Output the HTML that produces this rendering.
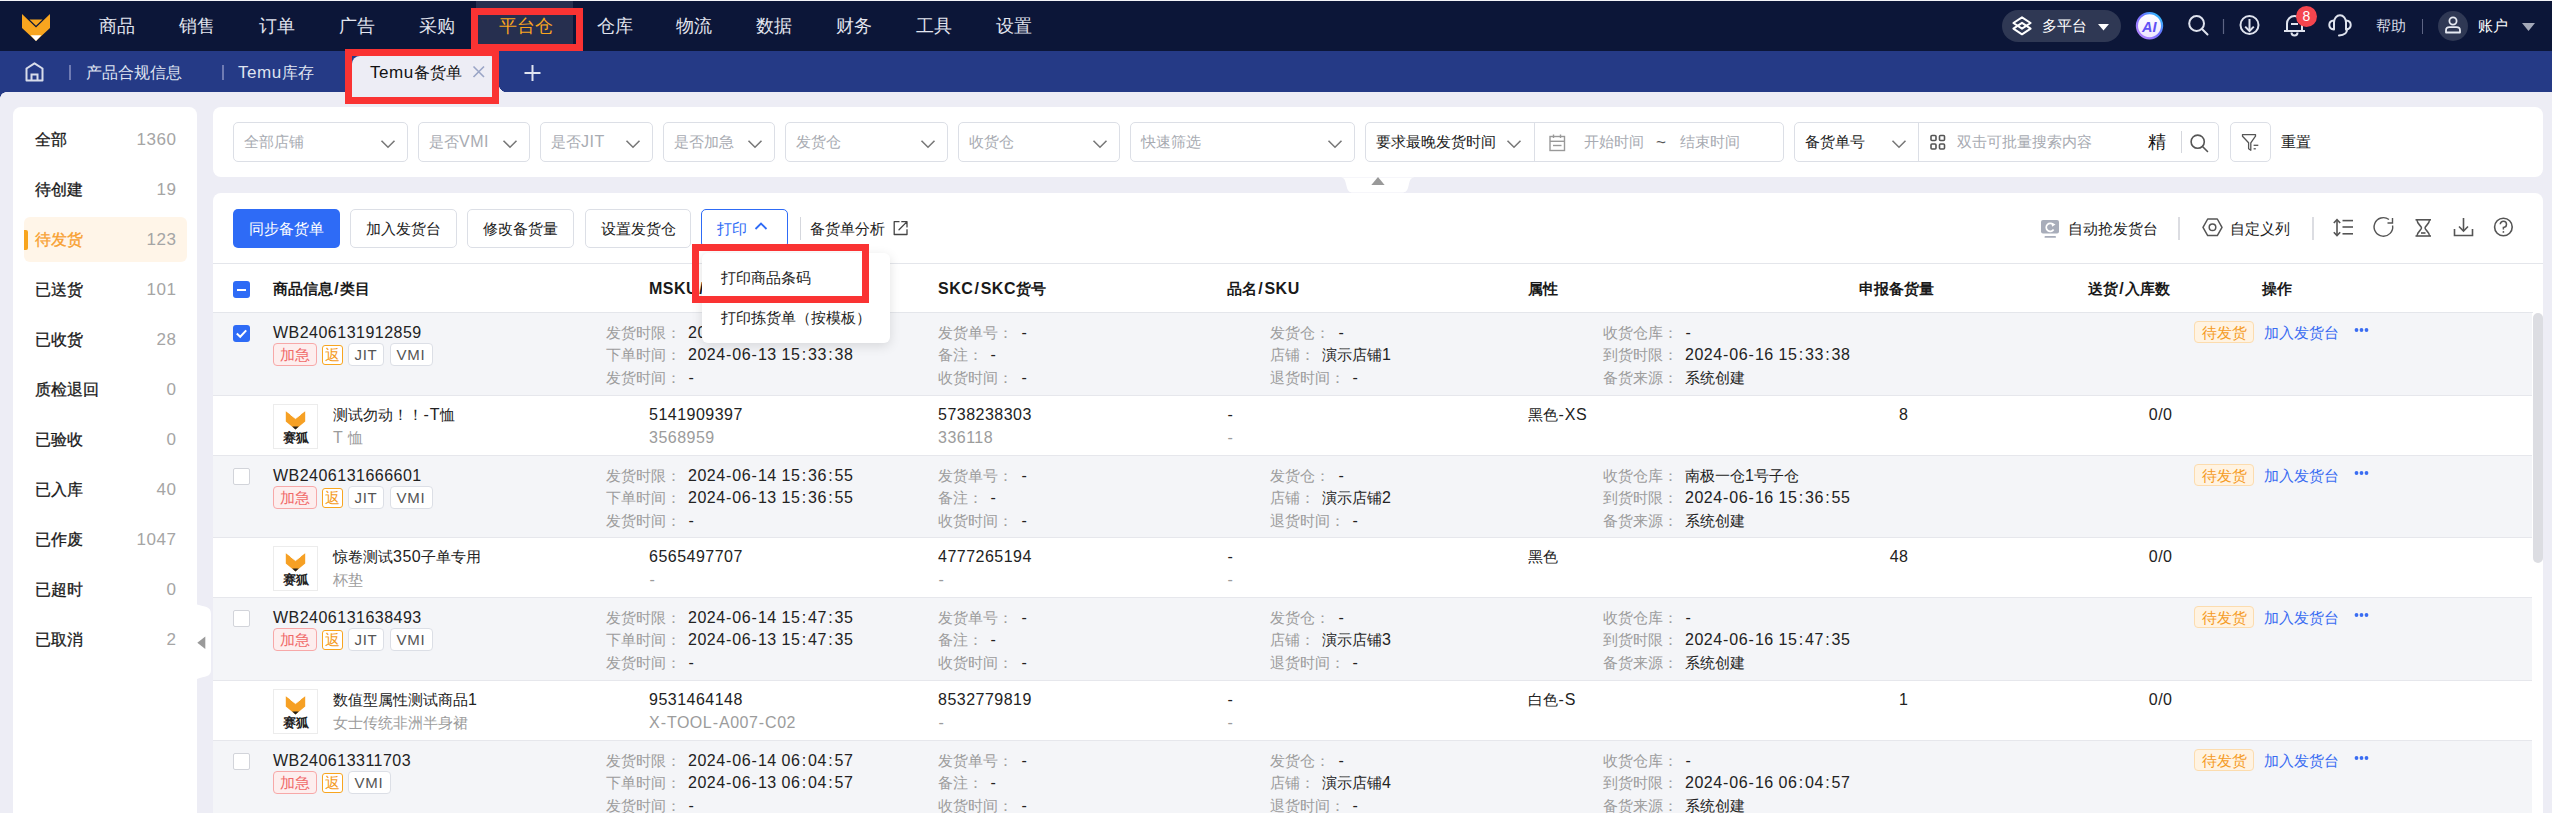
<!DOCTYPE html><html><head><meta charset="utf-8"><style>
*{box-sizing:border-box;margin:0;padding:0}
html,body{width:2552px;height:813px;overflow:hidden}
body{text-spacing-trim:space-all;position:relative;background:#ededf5;font-family:"Liberation Sans",sans-serif;color:#222}
.t{position:absolute;white-space:nowrap}
.r{position:absolute}
.l{letter-spacing:0.03em;font-size:1.0667em}
.c{font-style:normal;margin:0 1.4px}
.d{font-style:normal;margin:0 0.5px}
.hd .l{letter-spacing:0.03em}
svg{position:absolute;overflow:visible}
</style></head><body>
<div class="r" style="left:0px;top:0px;width:2552px;height:1px;background:#f4f4f8;"></div>
<div class="r" style="left:0px;top:1px;width:2552px;height:50px;background:#0c1638;"></div>
<svg style="left:0;top:0" width="60" height="51" viewBox="0 0 60 51">
<polygon points="22,14 36,27.6 50,14 50,28 36,41 22,28" fill="#f8a51f"/>
<polygon points="29.5,19.6 42.5,19.6 36,25.8" fill="#f8a51f"/>
<polygon points="30.6,35.3 41.4,35.3 36,41" fill="#ffffff"/>
</svg>
<div class="r" style="left:476px;top:1px;width:97px;height:50px;background:#262f4f;"></div>
<div class="t " style="left:99px;top:14.0px;font-size:18px;line-height:24px;color:#e2e5ef;">商品</div>
<div class="t " style="left:179px;top:14.0px;font-size:18px;line-height:24px;color:#e2e5ef;">销售</div>
<div class="t " style="left:259px;top:14.0px;font-size:18px;line-height:24px;color:#e2e5ef;">订单</div>
<div class="t " style="left:339px;top:14.0px;font-size:18px;line-height:24px;color:#e2e5ef;">广告</div>
<div class="t " style="left:419px;top:14.0px;font-size:18px;line-height:24px;color:#e2e5ef;">采购</div>
<div class="t " style="left:499px;top:14.0px;font-size:18px;line-height:24px;color:#f8a51f;">平台仓</div>
<div class="t " style="left:597px;top:14.0px;font-size:18px;line-height:24px;color:#e2e5ef;">仓库</div>
<div class="t " style="left:676px;top:14.0px;font-size:18px;line-height:24px;color:#e2e5ef;">物流</div>
<div class="t " style="left:756px;top:14.0px;font-size:18px;line-height:24px;color:#e2e5ef;">数据</div>
<div class="t " style="left:836px;top:14.0px;font-size:18px;line-height:24px;color:#e2e5ef;">财务</div>
<div class="t " style="left:916px;top:14.0px;font-size:18px;line-height:24px;color:#e2e5ef;">工具</div>
<div class="t " style="left:996px;top:14.0px;font-size:18px;line-height:24px;color:#e2e5ef;">设置</div>
<div class="r" style="left:2002px;top:10px;width:119px;height:32px;border-radius:16px;background:#2f3854"></div>
<svg style="left:2000px;top:0" width="50" height="51" viewBox="2000 0 50 51">
<path d="M2022 17.3 L2030.6 23 L2022 28.7 L2013.4 23 Z" fill="none" stroke="#fff" stroke-width="2" stroke-linejoin="round"/>
<path d="M2022 22.8 L2030.6 28.6 L2022 34.3 L2013.4 28.6 Z" fill="none" stroke="#fff" stroke-width="2" stroke-linejoin="round"/>
</svg>
<div class="t " style="left:2042px;top:15.0px;font-size:15px;line-height:22px;color:#ffffff;">多平台</div>
<svg style="left:2098px;top:24px" width="11" height="7" viewBox="0 0 11 7"><polygon points="0,0 11,0 5.5,6.5" fill="#fff"/></svg>
<svg style="left:2134px;top:11px" width="30" height="30" viewBox="0 0 30 30">
<defs><linearGradient id="aig" x1="0" y1="1" x2="1" y2="0"><stop offset="0" stop-color="#c58bff"/><stop offset="0.55" stop-color="#6d6cff"/><stop offset="1" stop-color="#21d3ff"/></linearGradient>
<linearGradient id="aif" x1="0" y1="0" x2="0" y2="1"><stop offset="0" stop-color="#ffffff"/><stop offset="1" stop-color="#efe6ff"/></linearGradient></defs>
<circle cx="15.5" cy="14.7" r="12.6" fill="url(#aif)" stroke="url(#aig)" stroke-width="2.2"/>
<text x="15.3" y="20.5" text-anchor="middle" font-family="Liberation Sans" font-weight="bold" font-style="italic" font-size="14.5" fill="#6150f4">AI</text>
</svg>
<svg style="left:2180px;top:8px" width="200" height="36" viewBox="2180 8 200 36">
<circle cx="2196.6" cy="23.5" r="7.4" fill="none" stroke="#dfe3ee" stroke-width="2"/>
<line x1="2202" y1="29" x2="2207.5" y2="34.5" stroke="#dfe3ee" stroke-width="2" stroke-linecap="round"/>
<line x1="2223.5" y1="19" x2="2223.5" y2="34" stroke="#5d6483" stroke-width="1.2"/>
<circle cx="2249.5" cy="25" r="9" fill="none" stroke="#dfe3ee" stroke-width="2"/>
<line x1="2249.5" y1="19" x2="2249.5" y2="30.5" stroke="#dfe3ee" stroke-width="2"/>
<polyline points="2245.2,26.6 2249.5,31 2253.8,26.6" fill="none" stroke="#dfe3ee" stroke-width="2"/>
<path d="M2287 30.5 V23.5 A7.5 7.5 0 0 1 2302 23.5 V30.5" fill="none" stroke="#dfe3ee" stroke-width="2"/>
<line x1="2284" y1="31" x2="2305" y2="31" stroke="#dfe3ee" stroke-width="2"/>
<path d="M2291.5 32.5 A3 3 0 0 0 2297.5 32.5" fill="none" stroke="#dfe3ee" stroke-width="2"/>
<line x1="2291" y1="24" x2="2298" y2="24" stroke="#dfe3ee" stroke-width="2"/>
<path d="M2334 27 V22.5 A6 7.2 0 0 1 2346 22.5 V27" fill="none" stroke="#dfe3ee" stroke-width="2"/>
<path d="M2334 20.6 Q2329.3 21 2329.3 25 Q2329.3 29 2334 29.4 Z" fill="none" stroke="#dfe3ee" stroke-width="2" stroke-linejoin="round"/>
<path d="M2346 20.6 Q2350.7 21 2350.7 25 Q2350.7 29 2346 29.4 Z" fill="none" stroke="#dfe3ee" stroke-width="2" stroke-linejoin="round"/>
<path d="M2347 29.5 Q2347 35 2339 35.5" fill="none" stroke="#dfe3ee" stroke-width="2" stroke-linecap="round"/>
</svg>
<div class="r" style="left:2296px;top:5.5px;width:21px;height:21px;border-radius:50%;background:#f4454e;color:#fff;font-size:14px;line-height:21px;text-align:center">8</div>
<div class="t " style="left:2376px;top:15.0px;font-size:15px;line-height:22px;color:#d6dae6;">帮助</div>
<div class="r" style="left:2421.5px;top:19px;width:1.2px;height:15px;background:#5d6483;"></div>
<div class="r" style="left:2438px;top:11px;width:30px;height:30px;border-radius:50%;background:#2f3854"></div>
<svg style="left:2438px;top:11px" width="30" height="30" viewBox="0 0 30 30">
<circle cx="15" cy="10" r="3.6" fill="none" stroke="#e6e9f2" stroke-width="1.8"/>
<path d="M8 21.5 V19.5 Q8 16.2 11.5 16.2 H18.5 Q22 16.2 22 19.5 V21.5 Z" fill="none" stroke="#e6e9f2" stroke-width="1.8" stroke-linejoin="round"/>
</svg>
<div class="t " style="left:2478px;top:15.0px;font-size:15px;line-height:22px;color:#ffffff;">账户</div>
<svg style="left:2522px;top:23px" width="13" height="9" viewBox="0 0 13 9"><polygon points="0,0 13,0 6.5,8" fill="#a3a8b8"/></svg>
<div class="r" style="left:0px;top:51px;width:2552px;height:41px;background:#253a86;"></div>
<div class="r" style="left:0;top:92px;width:6px;height:6px;background:radial-gradient(circle at 6px 6px, #ededf5 5.5px, #253a86 6px)"></div>
<svg style="left:0;top:51px" width="80" height="41" viewBox="0 51 80 41">
<path d="M26.5 80.5 V68.5 L34.5 63.3 L42.5 68.5 V80.5 Z" fill="none" stroke="#d8dcea" stroke-width="2" stroke-linejoin="round"/>
<path d="M31.5 80.5 V74.5 H37.5 V80.5" fill="none" stroke="#d8dcea" stroke-width="2"/>
</svg>
<div class="r" style="left:69px;top:65px;width:2px;height:15px;background:#6f7bb3;"></div>
<div class="t " style="left:86px;top:61.5px;font-size:16px;line-height:22px;color:#dfe3f0;">产品合规信息</div>
<div class="r" style="left:221.5px;top:65px;width:2px;height:15px;background:#6f7bb3;"></div>
<div class="t " style="left:238px;top:61.5px;font-size:16px;line-height:22px;color:#dfe3f0;"><span class="l">Temu</span>库存</div>
<div class="r" style="left:352px;top:56px;width:147px;height:36px;background:#ededf5;border-radius:8px 8px 0 0"></div>
<div class="r" style="left:344px;top:84px;width:8px;height:8px;background:radial-gradient(circle at 0 0, transparent 8px, #ededf5 8.5px)"></div>
<div class="r" style="left:499px;top:84px;width:8px;height:8px;background:radial-gradient(circle at 100% 0, transparent 8px, #ededf5 8.5px)"></div>
<div class="t " style="left:370px;top:62.0px;font-size:16px;line-height:22px;color:#111;"><span class="l">Temu</span>备货单</div>
<svg style="left:472px;top:65px" width="14" height="14" viewBox="0 0 14 14">
<path d="M1.5 1.5 L12 12 M12 1.5 L1.5 12" stroke="#9aa5c6" stroke-width="1.6"/></svg>
<svg style="left:520px;top:60px" width="24" height="26" viewBox="0 0 24 26">
<path d="M12.5 5 V21 M4.5 13 H20.5" stroke="#e0e4f0" stroke-width="2"/></svg>
<div class="r" style="left:13px;top:107px;width:184px;height:720px;background:#fff;border-radius:8px"></div>
<div class="r" style="left:24px;top:217px;width:163px;height:45px;background:#fff5e8;border-radius:6px"></div>
<div class="r" style="left:24px;top:230px;width:4px;height:20px;background:#f8a51f;border-radius:0 2px 2px 0"></div>
<div class="t " style="left:35px;top:129.0px;font-size:16px;line-height:22px;color:#1a1a1a;-webkit-text-stroke:0.3px currentColor;">全部</div>
<div class="t " style="right:2375.5px;top:129.0px;font-size:16px;line-height:22px;color:#a5a5a5;"><span class="l">1360</span></div>
<div class="t " style="left:35px;top:179.0px;font-size:16px;line-height:22px;color:#1a1a1a;-webkit-text-stroke:0.3px currentColor;">待创建</div>
<div class="t " style="right:2375.5px;top:179.0px;font-size:16px;line-height:22px;color:#a5a5a5;"><span class="l">19</span></div>
<div class="t " style="left:35px;top:229.0px;font-size:16px;line-height:22px;color:#f8a030;-webkit-text-stroke:0.3px currentColor;">待发货</div>
<div class="t " style="right:2375.5px;top:229.0px;font-size:16px;line-height:22px;color:#a5a5a5;"><span class="l">123</span></div>
<div class="t " style="left:35px;top:279.0px;font-size:16px;line-height:22px;color:#1a1a1a;-webkit-text-stroke:0.3px currentColor;">已送货</div>
<div class="t " style="right:2375.5px;top:279.0px;font-size:16px;line-height:22px;color:#a5a5a5;"><span class="l">101</span></div>
<div class="t " style="left:35px;top:329.0px;font-size:16px;line-height:22px;color:#1a1a1a;-webkit-text-stroke:0.3px currentColor;">已收货</div>
<div class="t " style="right:2375.5px;top:329.0px;font-size:16px;line-height:22px;color:#a5a5a5;"><span class="l">28</span></div>
<div class="t " style="left:35px;top:379.0px;font-size:16px;line-height:22px;color:#1a1a1a;-webkit-text-stroke:0.3px currentColor;">质检退回</div>
<div class="t " style="right:2375.5px;top:379.0px;font-size:16px;line-height:22px;color:#a5a5a5;"><span class="l">0</span></div>
<div class="t " style="left:35px;top:429.0px;font-size:16px;line-height:22px;color:#1a1a1a;-webkit-text-stroke:0.3px currentColor;">已验收</div>
<div class="t " style="right:2375.5px;top:429.0px;font-size:16px;line-height:22px;color:#a5a5a5;"><span class="l">0</span></div>
<div class="t " style="left:35px;top:479.0px;font-size:16px;line-height:22px;color:#1a1a1a;-webkit-text-stroke:0.3px currentColor;">已入库</div>
<div class="t " style="right:2375.5px;top:479.0px;font-size:16px;line-height:22px;color:#a5a5a5;"><span class="l">40</span></div>
<div class="t " style="left:35px;top:529.0px;font-size:16px;line-height:22px;color:#1a1a1a;-webkit-text-stroke:0.3px currentColor;">已作废</div>
<div class="t " style="right:2375.5px;top:529.0px;font-size:16px;line-height:22px;color:#a5a5a5;"><span class="l">1047</span></div>
<div class="t " style="left:35px;top:579.0px;font-size:16px;line-height:22px;color:#1a1a1a;-webkit-text-stroke:0.3px currentColor;">已超时</div>
<div class="t " style="right:2375.5px;top:579.0px;font-size:16px;line-height:22px;color:#a5a5a5;"><span class="l">0</span></div>
<div class="t " style="left:35px;top:629.0px;font-size:16px;line-height:22px;color:#1a1a1a;-webkit-text-stroke:0.3px currentColor;">已取消</div>
<div class="t " style="right:2375.5px;top:629.0px;font-size:16px;line-height:22px;color:#a5a5a5;"><span class="l">2</span></div>
<svg style="left:190px;top:600px" width="26" height="84" viewBox="190 600 26 84">
<path d="M197 604.5 C205 607 211 606 211 614 V670 C211 677 205 676 197 679 Z" fill="#fff"/>
<polygon points="197.3,642.7 205.3,636.5 205.3,649" fill="#9a9a9a"/>
</svg>
<div class="r" style="left:213px;top:107px;width:2330px;height:70px;background:#fff;border-radius:8px"></div>
<div class="r" style="left:233px;top:122px;width:175px;height:40px;border:1px solid #dcdfe6;border-radius:5px;background:#fff"></div>
<div class="t " style="left:244px;top:131.0px;font-size:15px;line-height:22px;color:#a8abb2;">全部店铺</div>
<svg style="left:380px;top:139px" width="16" height="10" viewBox="0 0 16 10"><polyline points="1.5,1.8 8,8.2 14.5,1.8" fill="none" stroke="#777" stroke-width="1.6"/></svg>
<div class="r" style="left:418px;top:122px;width:112px;height:40px;border:1px solid #dcdfe6;border-radius:5px;background:#fff"></div>
<div class="t " style="left:429px;top:131.0px;font-size:15px;line-height:22px;color:#a8abb2;">是否<span class="l">VMI</span></div>
<svg style="left:502px;top:139px" width="16" height="10" viewBox="0 0 16 10"><polyline points="1.5,1.8 8,8.2 14.5,1.8" fill="none" stroke="#777" stroke-width="1.6"/></svg>
<div class="r" style="left:540px;top:122px;width:113px;height:40px;border:1px solid #dcdfe6;border-radius:5px;background:#fff"></div>
<div class="t " style="left:551px;top:131.0px;font-size:15px;line-height:22px;color:#a8abb2;">是否<span class="l">JIT</span></div>
<svg style="left:625px;top:139px" width="16" height="10" viewBox="0 0 16 10"><polyline points="1.5,1.8 8,8.2 14.5,1.8" fill="none" stroke="#777" stroke-width="1.6"/></svg>
<div class="r" style="left:663px;top:122px;width:112px;height:40px;border:1px solid #dcdfe6;border-radius:5px;background:#fff"></div>
<div class="t " style="left:674px;top:131.0px;font-size:15px;line-height:22px;color:#a8abb2;">是否加急</div>
<svg style="left:747px;top:139px" width="16" height="10" viewBox="0 0 16 10"><polyline points="1.5,1.8 8,8.2 14.5,1.8" fill="none" stroke="#777" stroke-width="1.6"/></svg>
<div class="r" style="left:785px;top:122px;width:163px;height:40px;border:1px solid #dcdfe6;border-radius:5px;background:#fff"></div>
<div class="t " style="left:796px;top:131.0px;font-size:15px;line-height:22px;color:#a8abb2;">发货仓</div>
<svg style="left:920px;top:139px" width="16" height="10" viewBox="0 0 16 10"><polyline points="1.5,1.8 8,8.2 14.5,1.8" fill="none" stroke="#777" stroke-width="1.6"/></svg>
<div class="r" style="left:958px;top:122px;width:162px;height:40px;border:1px solid #dcdfe6;border-radius:5px;background:#fff"></div>
<div class="t " style="left:969px;top:131.0px;font-size:15px;line-height:22px;color:#a8abb2;">收货仓</div>
<svg style="left:1092px;top:139px" width="16" height="10" viewBox="0 0 16 10"><polyline points="1.5,1.8 8,8.2 14.5,1.8" fill="none" stroke="#777" stroke-width="1.6"/></svg>
<div class="r" style="left:1130px;top:122px;width:225px;height:40px;border:1px solid #dcdfe6;border-radius:5px;background:#fff"></div>
<div class="t " style="left:1141px;top:131.0px;font-size:15px;line-height:22px;color:#a8abb2;">快速筛选</div>
<svg style="left:1327px;top:139px" width="16" height="10" viewBox="0 0 16 10"><polyline points="1.5,1.8 8,8.2 14.5,1.8" fill="none" stroke="#777" stroke-width="1.6"/></svg>
<div class="r" style="left:1365px;top:122px;width:419px;height:40px;border:1px solid #dcdfe6;border-radius:5px;background:#fff"></div>
<div class="r" style="left:1534px;top:123px;width:1px;height:38px;background:#dcdfe6;"></div>
<div class="t " style="left:1376px;top:131.0px;font-size:15px;line-height:22px;color:#222;">要求最晚发货时间</div>
<svg style="left:1506px;top:139px" width="16" height="10" viewBox="0 0 16 10"><polyline points="1.5,1.8 8,8.2 14.5,1.8" fill="none" stroke="#777" stroke-width="1.6"/></svg>
<svg style="left:1545px;top:130px" width="24" height="24" viewBox="1545 130 24 24">
<rect x="1550" y="136.5" width="14.5" height="14" fill="none" stroke="#999" stroke-width="1.4"/>
<line x1="1550" y1="141.3" x2="1564.5" y2="141.3" stroke="#999" stroke-width="1.4"/>
<line x1="1553.5" y1="134.5" x2="1553.5" y2="138" stroke="#999" stroke-width="1.4"/>
<line x1="1560.5" y1="134.5" x2="1560.5" y2="138" stroke="#999" stroke-width="1.4"/>
<line x1="1553" y1="145.5" x2="1561.5" y2="145.5" stroke="#999" stroke-width="1.4"/>
</svg>
<div class="t " style="left:1584px;top:131.0px;font-size:15px;line-height:22px;color:#a8abb2;">开始时间</div>
<div class="t " style="left:1656px;top:132.0px;font-size:16px;line-height:22px;color:#555;"><span class="l">~</span></div>
<div class="t " style="left:1680px;top:131.0px;font-size:15px;line-height:22px;color:#a8abb2;">结束时间</div>
<div class="r" style="left:1794px;top:122px;width:425px;height:40px;border:1px solid #dcdfe6;border-radius:5px;background:#fff"></div>
<div class="r" style="left:1918px;top:123px;width:1px;height:38px;background:#dcdfe6;"></div>
<div class="t " style="left:1805px;top:131.0px;font-size:15px;line-height:22px;color:#222;">备货单号</div>
<svg style="left:1891px;top:139px" width="16" height="10" viewBox="0 0 16 10"><polyline points="1.5,1.8 8,8.2 14.5,1.8" fill="none" stroke="#777" stroke-width="1.6"/></svg>
<svg style="left:1928px;top:133px" width="20" height="20" viewBox="1928 133 20 20">
<rect x="1931" y="135.5" width="5" height="5" rx="1" fill="none" stroke="#555" stroke-width="1.6"/>
<rect x="1939.5" y="135.5" width="5" height="5" rx="1" fill="none" stroke="#555" stroke-width="1.6"/>
<rect x="1931" y="144" width="5" height="5" rx="1" fill="none" stroke="#555" stroke-width="1.6"/>
<rect x="1939.5" y="144" width="5" height="5" rx="1" fill="none" stroke="#555" stroke-width="1.6"/>
</svg>
<div class="t " style="left:1957px;top:131.0px;font-size:15px;line-height:22px;color:#a8abb2;">双击可批量搜索内容</div>
<div class="t " style="left:2148px;top:131.0px;font-size:18px;line-height:22px;color:#111;font-weight:500;">精</div>
<div class="r" style="left:2180.5px;top:131px;width:1.5px;height:22px;background:#d5d7dd;"></div>
<svg style="left:2186px;top:130px" width="26" height="26" viewBox="2186 130 26 26">
<circle cx="2197.7" cy="141.7" r="6.6" fill="none" stroke="#555" stroke-width="1.6"/>
<line x1="2202.5" y1="146.5" x2="2207.5" y2="151.5" stroke="#555" stroke-width="1.6" stroke-linecap="round"/>
</svg>
<div class="r" style="left:2229.5px;top:122px;width:41px;height:40px;border:1px solid #dcdfe6;border-radius:5px;background:#fff"></div>
<svg style="left:2236px;top:130px" width="26" height="26" viewBox="2236 130 26 26">
<path d="M2242.5 134.6 H2255.5 V136.2 L2250.8 142.8 V150.3 L2248.6 148.8 V142.8 L2242.5 136.2 Z" fill="none" stroke="#555" stroke-width="1.3" stroke-linejoin="round"/>
<line x1="2253.6" y1="145.3" x2="2258.3" y2="145.3" stroke="#555" stroke-width="1.3"/>
<line x1="2253.6" y1="148.8" x2="2255.8" y2="148.8" stroke="#555" stroke-width="1.3"/>
</svg>
<div class="t " style="left:2281px;top:131.0px;font-size:15px;line-height:22px;color:#222;">重置</div>
<svg style="left:1335px;top:176px" width="90" height="18" viewBox="1335 176 90 18">
<path d="M1341 177.5 C1344 178 1345 179 1346.5 186 C1347.5 190.5 1349 192.5 1353 192.5 H1402 C1406 192.5 1407.5 190.5 1408.5 186 C1410 179 1411 178 1414.5 177.5 Z" fill="#fff"/>
<polygon points="1371.3,185 1378,177 1384.6,185" fill="#999"/>
</svg>
<div class="r" style="left:213px;top:193px;width:2330px;height:640px;background:#fff;border-radius:8px"></div>
<div class="r" style="left:233px;top:209px;width:107px;height:39px;background:#2e6bf6;border-radius:5px"></div>
<div class="t " style="left:249px;top:217.5px;font-size:15px;line-height:22px;color:#fff;">同步备货单</div>
<div class="r" style="left:350px;top:209px;width:107px;height:39px;border:1px solid #dcdfe6;border-radius:5px;background:#fff"></div>
<div class="t " style="left:366px;top:217.5px;font-size:15px;line-height:22px;color:#222;">加入发货台</div>
<div class="r" style="left:467px;top:209px;width:107px;height:39px;border:1px solid #dcdfe6;border-radius:5px;background:#fff"></div>
<div class="t " style="left:483px;top:217.5px;font-size:15px;line-height:22px;color:#222;">修改备货量</div>
<div class="r" style="left:584.5px;top:209px;width:106.5px;height:39px;border:1px solid #dcdfe6;border-radius:5px;background:#fff"></div>
<div class="t " style="left:600.5px;top:217.5px;font-size:15px;line-height:22px;color:#222;">设置发货仓</div>
<div class="r" style="left:701px;top:209px;width:87px;height:39px;border:1px solid #2e6bf6;border-radius:5px;background:#fff"></div>
<div class="t " style="left:717px;top:217.5px;font-size:15px;line-height:22px;color:#2e6bf6;">打印</div>
<svg style="left:754px;top:221px" width="14" height="10" viewBox="0 0 14 10"><polyline points="1.5,8 7,2.5 12.5,8" fill="none" stroke="#2e6bf6" stroke-width="1.8"/></svg>
<div class="r" style="left:799.5px;top:217px;width:1.2px;height:23px;background:#d5d7dd;"></div>
<div class="t " style="left:810px;top:217.5px;font-size:15px;line-height:22px;color:#222;">备货单分析</div>
<svg style="left:890px;top:217px" width="22" height="22" viewBox="890 217 22 22">
<path d="M899.5 221.7 H894.2 V234.5 H907 V229.3" fill="none" stroke="#444" stroke-width="1.3" stroke-linejoin="round"/>
<path d="M901.8 221.7 H907 V226.9 M906.6 222.1 L899 229.7" fill="none" stroke="#444" stroke-width="1.3" stroke-linecap="round" stroke-linejoin="round"/>
</svg>
<svg style="left:2036px;top:214px" width="30" height="28" viewBox="2036 214 30 28">
<rect x="2041" y="220" width="18" height="13.5" rx="2" fill="#a8adba"/>
<rect x="2044.5" y="236" width="11.5" height="1.8" rx="0.9" fill="#a8adba"/>
<path d="M2053.3 224.8 A4 4 0 1 0 2053.6 229.5" fill="none" stroke="#fff" stroke-width="1.7"/>
<polygon points="2051.5,222.5 2055.5,224.5 2052,226.8" fill="#fff"/>
</svg>
<div class="t " style="left:2068px;top:217.5px;font-size:15px;line-height:22px;color:#222;">自动抢发货台</div>
<div class="r" style="left:2178px;top:217px;width:1.5px;height:23px;background:#dcdde2;"></div>
<svg style="left:2200px;top:214px" width="26" height="26" viewBox="2200 214 26 26">
<polygon points="2207.7,219 2217.3,219 2222,227.3 2217.3,235.6 2207.7,235.6 2203,227.3" fill="none" stroke="#555" stroke-width="1.5" stroke-linejoin="round"/>
<circle cx="2212.5" cy="227.3" r="3.3" fill="none" stroke="#555" stroke-width="1.5"/>
</svg>
<div class="t " style="left:2230px;top:217.5px;font-size:15px;line-height:22px;color:#222;">自定义列</div>
<div class="r" style="left:2312px;top:217px;width:1.5px;height:23px;background:#dcdde2;"></div>
<svg style="left:2325px;top:210px" width="200" height="34" viewBox="2325 210 200 34">
<line x1="2337" y1="220" x2="2337" y2="235" stroke="#555" stroke-width="1.6"/>
<polyline points="2333.8,223 2337,219.7 2340.2,223" fill="none" stroke="#555" stroke-width="1.6"/>
<polyline points="2333.8,232.3 2337,235.6 2340.2,232.3" fill="none" stroke="#555" stroke-width="1.6"/>
<line x1="2342.5" y1="220.6" x2="2353" y2="220.6" stroke="#555" stroke-width="1.6"/>
<line x1="2342.5" y1="227" x2="2353" y2="227" stroke="#555" stroke-width="1.6"/>
<line x1="2342.5" y1="233.8" x2="2353" y2="233.8" stroke="#555" stroke-width="1.6"/>
<path d="M2392.6 225.5 A9.3 9.3 0 1 1 2389 219.5" fill="none" stroke="#555" stroke-width="1.4"/>
<polyline points="2392.5,218 2392.5,223 2387.5,223" fill="none" stroke="#555" stroke-width="1.4"/>
<line x1="2415.5" y1="219.8" x2="2431" y2="219.8" stroke="#555" stroke-width="1.6"/>
<line x1="2415.5" y1="236" x2="2431" y2="236" stroke="#555" stroke-width="1.6"/>
<path d="M2417 220 C2417 224 2421.5 226 2421.5 228 C2421.5 230 2417 232 2417 236 M2429.5 220 C2429.5 224 2425 226 2425 228 C2425 230 2429.5 232 2429.5 236" fill="none" stroke="#555" stroke-width="1.5"/>
<line x1="2421" y1="233" x2="2425.5" y2="233" stroke="#555" stroke-width="1.6"/>
<line x1="2463.5" y1="218" x2="2463.5" y2="231" stroke="#555" stroke-width="1.6"/>
<polyline points="2459,226.5 2463.5,231 2468,226.5" fill="none" stroke="#555" stroke-width="1.6"/>
<polyline points="2454.5,229 2454.5,235.5 2472.5,235.5 2472.5,229" fill="none" stroke="#555" stroke-width="1.6"/>
<circle cx="2503.4" cy="227" r="8.8" fill="none" stroke="#555" stroke-width="1.6"/>
<path d="M2500.3 224.3 A3.1 3.1 0 1 1 2503.4 227.4 V229.5" fill="none" stroke="#555" stroke-width="1.5"/>
<circle cx="2503.4" cy="231.9" r="0.9" fill="#555"/>
</svg>
<div class="r" style="left:213px;top:263px;width:2330px;height:1px;background:#e4e6eb;"></div>
<div class="r" style="left:233px;top:281px;width:17px;height:17px;background:#2e6bf6;border-radius:3px"></div>
<div class="r" style="left:237px;top:288.5px;width:9.2px;height:2.4px;background:#fff;"></div>
<div class="t hd" style="left:273px;top:277.5px;font-size:15px;line-height:22px;color:#1a1a1a;font-weight:bold;">商品信息 <span class="l">/</span> 类目</div>
<div class="t hd" style="left:649px;top:277.5px;font-size:15px;line-height:22px;color:#1a1a1a;font-weight:bold;"><span class="l">MSKU</span> <span class="l">/</span> <span class="l">MSKU</span>货号</div>
<div class="t hd" style="left:938px;top:277.5px;font-size:15px;line-height:22px;color:#1a1a1a;font-weight:bold;"><span class="l">SKC</span> <span class="l">/</span> <span class="l">SKC</span>货号</div>
<div class="t hd" style="left:1227px;top:277.5px;font-size:15px;line-height:22px;color:#1a1a1a;font-weight:bold;">品名 <span class="l">/</span> <span class="l">SKU</span></div>
<div class="t hd" style="left:1528px;top:277.5px;font-size:15px;line-height:22px;color:#1a1a1a;font-weight:bold;">属性</div>
<div class="t hd" style="left:1859px;top:277.5px;font-size:15px;line-height:22px;color:#1a1a1a;font-weight:bold;">申报备货量</div>
<div class="t hd" style="left:2088px;top:277.5px;font-size:15px;line-height:22px;color:#1a1a1a;font-weight:bold;">送货 <span class="l">/</span> 入库数</div>
<div class="t hd" style="left:2262px;top:277.5px;font-size:15px;line-height:22px;color:#1a1a1a;font-weight:bold;">操作</div>
<div class="r" style="left:213px;top:312px;width:2320px;height:1px;background:#e4e6eb;"></div>
<div class="r" style="left:213px;top:313px;width:2319px;height:82px;background:#f4f5f8;"></div>
<div class="r" style="left:213px;top:395px;width:2319px;height:1px;background:#e6e7ec;"></div>
<div class="r" style="left:233px;top:325px;width:17px;height:17px;background:#2e6bf6;border-radius:3px"></div>
<svg style="left:233px;top:325px" width="17" height="17" viewBox="0 0 17 17"><polyline points="3.8,8.6 7.2,11.8 13.2,5.4" fill="none" stroke="#fff" stroke-width="2"/></svg>
<div class="t " style="left:273px;top:321.5px;font-size:15px;line-height:22px;color:#222;"><span class="l">WB2406131912859</span></div>
<div class="r" style="left:273px;top:343px;width:44px;height:23px;border:1px solid #f7a8a8;background:#fdeeee;border-radius:4px"></div>
<div class="t " style="left:280px;top:343.5px;font-size:15px;line-height:22px;color:#f06a6a;">加急</div>
<div class="r" style="left:322px;top:345px;width:21px;height:20px;border:1.5px solid #f8a51f;background:#fff;border-radius:3px"></div>
<div class="t " style="left:325px;top:343.5px;font-size:15px;line-height:22px;color:#f49a1a;">返</div>
<div class="r" style="left:348px;top:343px;width:36px;height:23px;border:1px solid #dcdfe6;background:#fff;border-radius:4px"></div>
<div class="t " style="left:354.5px;top:344.2px;font-size:15px;line-height:22px;color:#555;letter-spacing:0.7px;">JIT</div>
<div class="r" style="left:390px;top:343px;width:43px;height:23px;border:1px solid #dcdfe6;background:#fff;border-radius:4px"></div>
<div class="t " style="left:396.5px;top:344.2px;font-size:15px;line-height:22px;color:#555;letter-spacing:0.7px;">VMI</div>
<div class="t " style="left:606px;top:321.5px;font-size:15px;line-height:22px;color:#9c9c9c;">发货时限：</div>
<div class="t " style="left:688px;top:321.5px;font-size:15px;line-height:22px;color:#222;"><span class="l">2024<i class=d>-</i>06<i class=d>-</i>14 15<i class=c>:</i>33<i class=c>:</i>38</span></div>
<div class="t " style="left:606px;top:344.0px;font-size:15px;line-height:22px;color:#9c9c9c;">下单时间：</div>
<div class="t " style="left:688px;top:344.0px;font-size:15px;line-height:22px;color:#222;"><span class="l">2024<i class=d>-</i>06<i class=d>-</i>13 15<i class=c>:</i>33<i class=c>:</i>38</span></div>
<div class="t " style="left:606px;top:366.5px;font-size:15px;line-height:22px;color:#9c9c9c;">发货时间：</div>
<div class="t " style="left:688px;top:366.5px;font-size:15px;line-height:22px;color:#222;"><span class="l"><i class=d>-</i></span></div>
<div class="t " style="left:938px;top:321.5px;font-size:15px;line-height:22px;color:#9c9c9c;">发货单号：</div>
<div class="t " style="left:1021px;top:321.5px;font-size:15px;line-height:22px;color:#222;"><span class="l"><i class=d>-</i></span></div>
<div class="t " style="left:938px;top:344.0px;font-size:15px;line-height:22px;color:#9c9c9c;">备注：</div>
<div class="t " style="left:990px;top:344.0px;font-size:15px;line-height:22px;color:#222;"><span class="l"><i class=d>-</i></span></div>
<div class="t " style="left:938px;top:366.5px;font-size:15px;line-height:22px;color:#9c9c9c;">收货时间：</div>
<div class="t " style="left:1021px;top:366.5px;font-size:15px;line-height:22px;color:#222;"><span class="l"><i class=d>-</i></span></div>
<div class="t " style="left:1270px;top:321.5px;font-size:15px;line-height:22px;color:#9c9c9c;">发货仓：</div>
<div class="t " style="left:1338px;top:321.5px;font-size:15px;line-height:22px;color:#222;"><span class="l"><i class=d>-</i></span></div>
<div class="t " style="left:1270px;top:344.0px;font-size:15px;line-height:22px;color:#9c9c9c;">店铺：</div>
<div class="t " style="left:1322px;top:344.0px;font-size:15px;line-height:22px;color:#222;">演示店铺<span class="l">1</span></div>
<div class="t " style="left:1270px;top:366.5px;font-size:15px;line-height:22px;color:#9c9c9c;">退货时间：</div>
<div class="t " style="left:1352px;top:366.5px;font-size:15px;line-height:22px;color:#222;"><span class="l"><i class=d>-</i></span></div>
<div class="t " style="left:1603px;top:321.5px;font-size:15px;line-height:22px;color:#9c9c9c;">收货仓库：</div>
<div class="t " style="left:1685px;top:321.5px;font-size:15px;line-height:22px;color:#222;"><span class="l"><i class=d>-</i></span></div>
<div class="t " style="left:1603px;top:344.0px;font-size:15px;line-height:22px;color:#9c9c9c;">到货时限：</div>
<div class="t " style="left:1685px;top:344.0px;font-size:15px;line-height:22px;color:#222;"><span class="l">2024<i class=d>-</i>06<i class=d>-</i>16 15<i class=c>:</i>33<i class=c>:</i>38</span></div>
<div class="t " style="left:1603px;top:366.5px;font-size:15px;line-height:22px;color:#9c9c9c;">备货来源：</div>
<div class="t " style="left:1685px;top:366.5px;font-size:15px;line-height:22px;color:#222;">系统创建</div>
<div class="r" style="left:2194px;top:321px;width:60px;height:22px;border:1px solid #fcdcae;background:#fff3e2;border-radius:4px"></div>
<div class="t " style="left:2201.5px;top:321.5px;font-size:15px;line-height:22px;color:#f59b25;">待发货</div>
<div class="t " style="left:2264px;top:321.5px;font-size:15px;line-height:22px;color:#3a6cf2;">加入发货台</div>
<svg style="left:2354px;top:327px" width="16" height="6" viewBox="0 0 16 6"><circle cx="2.5" cy="3" r="1.9" fill="#3a6cf2"/><circle cx="7.5" cy="3" r="1.9" fill="#3a6cf2"/><circle cx="12.5" cy="3" r="1.9" fill="#3a6cf2"/></svg>
<div class="r" style="left:213px;top:455px;width:2319px;height:1px;background:#e6e7ec;"></div>
<div class="r" style="left:273px;top:403.5px;width:45px;height:45px;border:1px solid #ececec;background:#fff"></div>
<svg style="left:273px;top:403.5px" width="45" height="45" viewBox="0 0 45 45">
<polygon points="12.8,7.2 22.5,14.6 32.2,7.2 32.2,17.4 22.5,25.4 12.8,17.4" fill="#f6a024"/>
<polyline points="17.2,10.4 22.5,14.6 27.8,10.4" fill="none" stroke="#fff" stroke-width="0.9"/>
<polygon points="19.2,22.6 25.8,22.6 22.5,25.6" fill="#222"/>
</svg>
<div class="t " style="left:283px;top:429.5px;font-size:12.5px;line-height:16px;color:#222;font-weight:bold;">赛狐</div>
<div class="t " style="left:333px;top:404.0px;font-size:15px;line-height:22px;color:#222;">测试勿动！！<span class="l"><i class=d>-</i>T</span>恤</div>
<div class="t " style="left:333px;top:427.0px;font-size:15px;line-height:22px;color:#9c9c9c;"><span class="l">T </span>恤</div>
<div class="t " style="left:649px;top:404.0px;font-size:15px;line-height:22px;color:#222;"><span class="l">5141909397</span></div>
<div class="t " style="left:649px;top:427.0px;font-size:15px;line-height:22px;color:#9c9c9c;"><span class="l">3568959</span></div>
<div class="t " style="left:938px;top:404.0px;font-size:15px;line-height:22px;color:#222;"><span class="l">5738238303</span></div>
<div class="t " style="left:938px;top:427.0px;font-size:15px;line-height:22px;color:#9c9c9c;"><span class="l">336118</span></div>
<div class="t " style="left:1227px;top:404.0px;font-size:15px;line-height:22px;color:#222;"><span class="l"><i class=d>-</i></span></div>
<div class="t " style="left:1227px;top:427.0px;font-size:15px;line-height:22px;color:#9c9c9c;"><span class="l"><i class=d>-</i></span></div>
<div class="t " style="left:1528px;top:404.0px;font-size:15px;line-height:22px;color:#222;">黑色<span class="l"><i class=d>-</i>XS</span></div>
<div class="t " style="right:643.5px;top:404.0px;font-size:15px;line-height:22px;color:#222;"><span class="l">8</span></div>
<div class="t " style="right:379.5px;top:404.0px;font-size:15px;line-height:22px;color:#222;"><span class="l">0/0</span></div>
<div class="r" style="left:213px;top:456px;width:2319px;height:81px;background:#f4f5f8;"></div>
<div class="r" style="left:213px;top:537px;width:2319px;height:1px;background:#e6e7ec;"></div>
<div class="r" style="left:233px;top:468px;width:17px;height:17px;background:#fff;border:1px solid #d2d4da;border-radius:2px"></div>
<div class="t " style="left:273px;top:464.5px;font-size:15px;line-height:22px;color:#222;"><span class="l">WB2406131666601</span></div>
<div class="r" style="left:273px;top:486px;width:44px;height:23px;border:1px solid #f7a8a8;background:#fdeeee;border-radius:4px"></div>
<div class="t " style="left:280px;top:486.5px;font-size:15px;line-height:22px;color:#f06a6a;">加急</div>
<div class="r" style="left:322px;top:488px;width:21px;height:20px;border:1.5px solid #f8a51f;background:#fff;border-radius:3px"></div>
<div class="t " style="left:325px;top:486.5px;font-size:15px;line-height:22px;color:#f49a1a;">返</div>
<div class="r" style="left:348px;top:486px;width:36px;height:23px;border:1px solid #dcdfe6;background:#fff;border-radius:4px"></div>
<div class="t " style="left:354.5px;top:487.2px;font-size:15px;line-height:22px;color:#555;letter-spacing:0.7px;">JIT</div>
<div class="r" style="left:390px;top:486px;width:43px;height:23px;border:1px solid #dcdfe6;background:#fff;border-radius:4px"></div>
<div class="t " style="left:396.5px;top:487.2px;font-size:15px;line-height:22px;color:#555;letter-spacing:0.7px;">VMI</div>
<div class="t " style="left:606px;top:464.5px;font-size:15px;line-height:22px;color:#9c9c9c;">发货时限：</div>
<div class="t " style="left:688px;top:464.5px;font-size:15px;line-height:22px;color:#222;"><span class="l">2024<i class=d>-</i>06<i class=d>-</i>14 15<i class=c>:</i>36<i class=c>:</i>55</span></div>
<div class="t " style="left:606px;top:487.0px;font-size:15px;line-height:22px;color:#9c9c9c;">下单时间：</div>
<div class="t " style="left:688px;top:487.0px;font-size:15px;line-height:22px;color:#222;"><span class="l">2024<i class=d>-</i>06<i class=d>-</i>13 15<i class=c>:</i>36<i class=c>:</i>55</span></div>
<div class="t " style="left:606px;top:509.5px;font-size:15px;line-height:22px;color:#9c9c9c;">发货时间：</div>
<div class="t " style="left:688px;top:509.5px;font-size:15px;line-height:22px;color:#222;"><span class="l"><i class=d>-</i></span></div>
<div class="t " style="left:938px;top:464.5px;font-size:15px;line-height:22px;color:#9c9c9c;">发货单号：</div>
<div class="t " style="left:1021px;top:464.5px;font-size:15px;line-height:22px;color:#222;"><span class="l"><i class=d>-</i></span></div>
<div class="t " style="left:938px;top:487.0px;font-size:15px;line-height:22px;color:#9c9c9c;">备注：</div>
<div class="t " style="left:990px;top:487.0px;font-size:15px;line-height:22px;color:#222;"><span class="l"><i class=d>-</i></span></div>
<div class="t " style="left:938px;top:509.5px;font-size:15px;line-height:22px;color:#9c9c9c;">收货时间：</div>
<div class="t " style="left:1021px;top:509.5px;font-size:15px;line-height:22px;color:#222;"><span class="l"><i class=d>-</i></span></div>
<div class="t " style="left:1270px;top:464.5px;font-size:15px;line-height:22px;color:#9c9c9c;">发货仓：</div>
<div class="t " style="left:1338px;top:464.5px;font-size:15px;line-height:22px;color:#222;"><span class="l"><i class=d>-</i></span></div>
<div class="t " style="left:1270px;top:487.0px;font-size:15px;line-height:22px;color:#9c9c9c;">店铺：</div>
<div class="t " style="left:1322px;top:487.0px;font-size:15px;line-height:22px;color:#222;">演示店铺<span class="l">2</span></div>
<div class="t " style="left:1270px;top:509.5px;font-size:15px;line-height:22px;color:#9c9c9c;">退货时间：</div>
<div class="t " style="left:1352px;top:509.5px;font-size:15px;line-height:22px;color:#222;"><span class="l"><i class=d>-</i></span></div>
<div class="t " style="left:1603px;top:464.5px;font-size:15px;line-height:22px;color:#9c9c9c;">收货仓库：</div>
<div class="t " style="left:1685px;top:464.5px;font-size:15px;line-height:22px;color:#222;">南极一仓<span class="l">1</span>号子仓</div>
<div class="t " style="left:1603px;top:487.0px;font-size:15px;line-height:22px;color:#9c9c9c;">到货时限：</div>
<div class="t " style="left:1685px;top:487.0px;font-size:15px;line-height:22px;color:#222;"><span class="l">2024<i class=d>-</i>06<i class=d>-</i>16 15<i class=c>:</i>36<i class=c>:</i>55</span></div>
<div class="t " style="left:1603px;top:509.5px;font-size:15px;line-height:22px;color:#9c9c9c;">备货来源：</div>
<div class="t " style="left:1685px;top:509.5px;font-size:15px;line-height:22px;color:#222;">系统创建</div>
<div class="r" style="left:2194px;top:464px;width:60px;height:22px;border:1px solid #fcdcae;background:#fff3e2;border-radius:4px"></div>
<div class="t " style="left:2201.5px;top:464.5px;font-size:15px;line-height:22px;color:#f59b25;">待发货</div>
<div class="t " style="left:2264px;top:464.5px;font-size:15px;line-height:22px;color:#3a6cf2;">加入发货台</div>
<svg style="left:2354px;top:470px" width="16" height="6" viewBox="0 0 16 6"><circle cx="2.5" cy="3" r="1.9" fill="#3a6cf2"/><circle cx="7.5" cy="3" r="1.9" fill="#3a6cf2"/><circle cx="12.5" cy="3" r="1.9" fill="#3a6cf2"/></svg>
<div class="r" style="left:213px;top:597px;width:2319px;height:1px;background:#e6e7ec;"></div>
<div class="r" style="left:273px;top:545.5px;width:45px;height:45px;border:1px solid #ececec;background:#fff"></div>
<svg style="left:273px;top:545.5px" width="45" height="45" viewBox="0 0 45 45">
<polygon points="12.8,7.2 22.5,14.6 32.2,7.2 32.2,17.4 22.5,25.4 12.8,17.4" fill="#f6a024"/>
<polyline points="17.2,10.4 22.5,14.6 27.8,10.4" fill="none" stroke="#fff" stroke-width="0.9"/>
<polygon points="19.2,22.6 25.8,22.6 22.5,25.6" fill="#222"/>
</svg>
<div class="t " style="left:283px;top:571.5px;font-size:12.5px;line-height:16px;color:#222;font-weight:bold;">赛狐</div>
<div class="t " style="left:333px;top:546.0px;font-size:15px;line-height:22px;color:#222;">惊卷测试<span class="l">350</span>子单专用</div>
<div class="t " style="left:333px;top:569.0px;font-size:15px;line-height:22px;color:#9c9c9c;">杯垫</div>
<div class="t " style="left:649px;top:546.0px;font-size:15px;line-height:22px;color:#222;"><span class="l">6565497707</span></div>
<div class="t " style="left:649px;top:569.0px;font-size:15px;line-height:22px;color:#9c9c9c;"><span class="l"><i class=d>-</i></span></div>
<div class="t " style="left:938px;top:546.0px;font-size:15px;line-height:22px;color:#222;"><span class="l">4777265194</span></div>
<div class="t " style="left:938px;top:569.0px;font-size:15px;line-height:22px;color:#9c9c9c;"><span class="l"><i class=d>-</i></span></div>
<div class="t " style="left:1227px;top:546.0px;font-size:15px;line-height:22px;color:#222;"><span class="l"><i class=d>-</i></span></div>
<div class="t " style="left:1227px;top:569.0px;font-size:15px;line-height:22px;color:#9c9c9c;"><span class="l"><i class=d>-</i></span></div>
<div class="t " style="left:1528px;top:546.0px;font-size:15px;line-height:22px;color:#222;">黑色</div>
<div class="t " style="right:643.5px;top:546.0px;font-size:15px;line-height:22px;color:#222;"><span class="l">48</span></div>
<div class="t " style="right:379.5px;top:546.0px;font-size:15px;line-height:22px;color:#222;"><span class="l">0/0</span></div>
<div class="r" style="left:213px;top:598px;width:2319px;height:82px;background:#f4f5f8;"></div>
<div class="r" style="left:213px;top:680px;width:2319px;height:1px;background:#e6e7ec;"></div>
<div class="r" style="left:233px;top:610px;width:17px;height:17px;background:#fff;border:1px solid #d2d4da;border-radius:2px"></div>
<div class="t " style="left:273px;top:606.5px;font-size:15px;line-height:22px;color:#222;"><span class="l">WB2406131638493</span></div>
<div class="r" style="left:273px;top:628px;width:44px;height:23px;border:1px solid #f7a8a8;background:#fdeeee;border-radius:4px"></div>
<div class="t " style="left:280px;top:628.5px;font-size:15px;line-height:22px;color:#f06a6a;">加急</div>
<div class="r" style="left:322px;top:630px;width:21px;height:20px;border:1.5px solid #f8a51f;background:#fff;border-radius:3px"></div>
<div class="t " style="left:325px;top:628.5px;font-size:15px;line-height:22px;color:#f49a1a;">返</div>
<div class="r" style="left:348px;top:628px;width:36px;height:23px;border:1px solid #dcdfe6;background:#fff;border-radius:4px"></div>
<div class="t " style="left:354.5px;top:629.2px;font-size:15px;line-height:22px;color:#555;letter-spacing:0.7px;">JIT</div>
<div class="r" style="left:390px;top:628px;width:43px;height:23px;border:1px solid #dcdfe6;background:#fff;border-radius:4px"></div>
<div class="t " style="left:396.5px;top:629.2px;font-size:15px;line-height:22px;color:#555;letter-spacing:0.7px;">VMI</div>
<div class="t " style="left:606px;top:606.5px;font-size:15px;line-height:22px;color:#9c9c9c;">发货时限：</div>
<div class="t " style="left:688px;top:606.5px;font-size:15px;line-height:22px;color:#222;"><span class="l">2024<i class=d>-</i>06<i class=d>-</i>14 15<i class=c>:</i>47<i class=c>:</i>35</span></div>
<div class="t " style="left:606px;top:629.0px;font-size:15px;line-height:22px;color:#9c9c9c;">下单时间：</div>
<div class="t " style="left:688px;top:629.0px;font-size:15px;line-height:22px;color:#222;"><span class="l">2024<i class=d>-</i>06<i class=d>-</i>13 15<i class=c>:</i>47<i class=c>:</i>35</span></div>
<div class="t " style="left:606px;top:651.5px;font-size:15px;line-height:22px;color:#9c9c9c;">发货时间：</div>
<div class="t " style="left:688px;top:651.5px;font-size:15px;line-height:22px;color:#222;"><span class="l"><i class=d>-</i></span></div>
<div class="t " style="left:938px;top:606.5px;font-size:15px;line-height:22px;color:#9c9c9c;">发货单号：</div>
<div class="t " style="left:1021px;top:606.5px;font-size:15px;line-height:22px;color:#222;"><span class="l"><i class=d>-</i></span></div>
<div class="t " style="left:938px;top:629.0px;font-size:15px;line-height:22px;color:#9c9c9c;">备注：</div>
<div class="t " style="left:990px;top:629.0px;font-size:15px;line-height:22px;color:#222;"><span class="l"><i class=d>-</i></span></div>
<div class="t " style="left:938px;top:651.5px;font-size:15px;line-height:22px;color:#9c9c9c;">收货时间：</div>
<div class="t " style="left:1021px;top:651.5px;font-size:15px;line-height:22px;color:#222;"><span class="l"><i class=d>-</i></span></div>
<div class="t " style="left:1270px;top:606.5px;font-size:15px;line-height:22px;color:#9c9c9c;">发货仓：</div>
<div class="t " style="left:1338px;top:606.5px;font-size:15px;line-height:22px;color:#222;"><span class="l"><i class=d>-</i></span></div>
<div class="t " style="left:1270px;top:629.0px;font-size:15px;line-height:22px;color:#9c9c9c;">店铺：</div>
<div class="t " style="left:1322px;top:629.0px;font-size:15px;line-height:22px;color:#222;">演示店铺<span class="l">3</span></div>
<div class="t " style="left:1270px;top:651.5px;font-size:15px;line-height:22px;color:#9c9c9c;">退货时间：</div>
<div class="t " style="left:1352px;top:651.5px;font-size:15px;line-height:22px;color:#222;"><span class="l"><i class=d>-</i></span></div>
<div class="t " style="left:1603px;top:606.5px;font-size:15px;line-height:22px;color:#9c9c9c;">收货仓库：</div>
<div class="t " style="left:1685px;top:606.5px;font-size:15px;line-height:22px;color:#222;"><span class="l"><i class=d>-</i></span></div>
<div class="t " style="left:1603px;top:629.0px;font-size:15px;line-height:22px;color:#9c9c9c;">到货时限：</div>
<div class="t " style="left:1685px;top:629.0px;font-size:15px;line-height:22px;color:#222;"><span class="l">2024<i class=d>-</i>06<i class=d>-</i>16 15<i class=c>:</i>47<i class=c>:</i>35</span></div>
<div class="t " style="left:1603px;top:651.5px;font-size:15px;line-height:22px;color:#9c9c9c;">备货来源：</div>
<div class="t " style="left:1685px;top:651.5px;font-size:15px;line-height:22px;color:#222;">系统创建</div>
<div class="r" style="left:2194px;top:606px;width:60px;height:22px;border:1px solid #fcdcae;background:#fff3e2;border-radius:4px"></div>
<div class="t " style="left:2201.5px;top:606.5px;font-size:15px;line-height:22px;color:#f59b25;">待发货</div>
<div class="t " style="left:2264px;top:606.5px;font-size:15px;line-height:22px;color:#3a6cf2;">加入发货台</div>
<svg style="left:2354px;top:612px" width="16" height="6" viewBox="0 0 16 6"><circle cx="2.5" cy="3" r="1.9" fill="#3a6cf2"/><circle cx="7.5" cy="3" r="1.9" fill="#3a6cf2"/><circle cx="12.5" cy="3" r="1.9" fill="#3a6cf2"/></svg>
<div class="r" style="left:213px;top:740px;width:2319px;height:1px;background:#e6e7ec;"></div>
<div class="r" style="left:273px;top:688.5px;width:45px;height:45px;border:1px solid #ececec;background:#fff"></div>
<svg style="left:273px;top:688.5px" width="45" height="45" viewBox="0 0 45 45">
<polygon points="12.8,7.2 22.5,14.6 32.2,7.2 32.2,17.4 22.5,25.4 12.8,17.4" fill="#f6a024"/>
<polyline points="17.2,10.4 22.5,14.6 27.8,10.4" fill="none" stroke="#fff" stroke-width="0.9"/>
<polygon points="19.2,22.6 25.8,22.6 22.5,25.6" fill="#222"/>
</svg>
<div class="t " style="left:283px;top:714.5px;font-size:12.5px;line-height:16px;color:#222;font-weight:bold;">赛狐</div>
<div class="t " style="left:333px;top:689.0px;font-size:15px;line-height:22px;color:#222;">数值型属性测试商品<span class="l">1</span></div>
<div class="t " style="left:333px;top:712.0px;font-size:15px;line-height:22px;color:#9c9c9c;">女士传统非洲半身裙</div>
<div class="t " style="left:649px;top:689.0px;font-size:15px;line-height:22px;color:#222;"><span class="l">9531464148</span></div>
<div class="t " style="left:649px;top:712.0px;font-size:15px;line-height:22px;color:#9c9c9c;"><span class="l">X<i class=d>-</i>TOOL<i class=d>-</i>A007<i class=d>-</i>C02</span></div>
<div class="t " style="left:938px;top:689.0px;font-size:15px;line-height:22px;color:#222;"><span class="l">8532779819</span></div>
<div class="t " style="left:938px;top:712.0px;font-size:15px;line-height:22px;color:#9c9c9c;"><span class="l"><i class=d>-</i></span></div>
<div class="t " style="left:1227px;top:689.0px;font-size:15px;line-height:22px;color:#222;"><span class="l"><i class=d>-</i></span></div>
<div class="t " style="left:1227px;top:712.0px;font-size:15px;line-height:22px;color:#9c9c9c;"><span class="l"><i class=d>-</i></span></div>
<div class="t " style="left:1528px;top:689.0px;font-size:15px;line-height:22px;color:#222;">白色<span class="l"><i class=d>-</i>S</span></div>
<div class="t " style="right:643.5px;top:689.0px;font-size:15px;line-height:22px;color:#222;"><span class="l">1</span></div>
<div class="t " style="right:379.5px;top:689.0px;font-size:15px;line-height:22px;color:#222;"><span class="l">0/0</span></div>
<div class="r" style="left:213px;top:741px;width:2319px;height:81px;background:#f4f5f8;"></div>
<div class="r" style="left:213px;top:822px;width:2319px;height:1px;background:#e6e7ec;"></div>
<div class="r" style="left:233px;top:753px;width:17px;height:17px;background:#fff;border:1px solid #d2d4da;border-radius:2px"></div>
<div class="t " style="left:273px;top:749.5px;font-size:15px;line-height:22px;color:#222;"><span class="l">WB240613311703</span></div>
<div class="r" style="left:273px;top:771px;width:44px;height:23px;border:1px solid #f7a8a8;background:#fdeeee;border-radius:4px"></div>
<div class="t " style="left:280px;top:771.5px;font-size:15px;line-height:22px;color:#f06a6a;">加急</div>
<div class="r" style="left:322px;top:773px;width:21px;height:20px;border:1.5px solid #f8a51f;background:#fff;border-radius:3px"></div>
<div class="t " style="left:325px;top:771.5px;font-size:15px;line-height:22px;color:#f49a1a;">返</div>
<div class="r" style="left:348px;top:771px;width:43px;height:23px;border:1px solid #dcdfe6;background:#fff;border-radius:4px"></div>
<div class="t " style="left:354.5px;top:772.2px;font-size:15px;line-height:22px;color:#555;letter-spacing:0.7px;">VMI</div>
<div class="t " style="left:606px;top:749.5px;font-size:15px;line-height:22px;color:#9c9c9c;">发货时限：</div>
<div class="t " style="left:688px;top:749.5px;font-size:15px;line-height:22px;color:#222;"><span class="l">2024<i class=d>-</i>06<i class=d>-</i>14 06<i class=c>:</i>04<i class=c>:</i>57</span></div>
<div class="t " style="left:606px;top:772.0px;font-size:15px;line-height:22px;color:#9c9c9c;">下单时间：</div>
<div class="t " style="left:688px;top:772.0px;font-size:15px;line-height:22px;color:#222;"><span class="l">2024<i class=d>-</i>06<i class=d>-</i>13 06<i class=c>:</i>04<i class=c>:</i>57</span></div>
<div class="t " style="left:606px;top:794.5px;font-size:15px;line-height:22px;color:#9c9c9c;">发货时间：</div>
<div class="t " style="left:688px;top:794.5px;font-size:15px;line-height:22px;color:#222;"><span class="l"><i class=d>-</i></span></div>
<div class="t " style="left:938px;top:749.5px;font-size:15px;line-height:22px;color:#9c9c9c;">发货单号：</div>
<div class="t " style="left:1021px;top:749.5px;font-size:15px;line-height:22px;color:#222;"><span class="l"><i class=d>-</i></span></div>
<div class="t " style="left:938px;top:772.0px;font-size:15px;line-height:22px;color:#9c9c9c;">备注：</div>
<div class="t " style="left:990px;top:772.0px;font-size:15px;line-height:22px;color:#222;"><span class="l"><i class=d>-</i></span></div>
<div class="t " style="left:938px;top:794.5px;font-size:15px;line-height:22px;color:#9c9c9c;">收货时间：</div>
<div class="t " style="left:1021px;top:794.5px;font-size:15px;line-height:22px;color:#222;"><span class="l"><i class=d>-</i></span></div>
<div class="t " style="left:1270px;top:749.5px;font-size:15px;line-height:22px;color:#9c9c9c;">发货仓：</div>
<div class="t " style="left:1338px;top:749.5px;font-size:15px;line-height:22px;color:#222;"><span class="l"><i class=d>-</i></span></div>
<div class="t " style="left:1270px;top:772.0px;font-size:15px;line-height:22px;color:#9c9c9c;">店铺：</div>
<div class="t " style="left:1322px;top:772.0px;font-size:15px;line-height:22px;color:#222;">演示店铺<span class="l">4</span></div>
<div class="t " style="left:1270px;top:794.5px;font-size:15px;line-height:22px;color:#9c9c9c;">退货时间：</div>
<div class="t " style="left:1352px;top:794.5px;font-size:15px;line-height:22px;color:#222;"><span class="l"><i class=d>-</i></span></div>
<div class="t " style="left:1603px;top:749.5px;font-size:15px;line-height:22px;color:#9c9c9c;">收货仓库：</div>
<div class="t " style="left:1685px;top:749.5px;font-size:15px;line-height:22px;color:#222;"><span class="l"><i class=d>-</i></span></div>
<div class="t " style="left:1603px;top:772.0px;font-size:15px;line-height:22px;color:#9c9c9c;">到货时限：</div>
<div class="t " style="left:1685px;top:772.0px;font-size:15px;line-height:22px;color:#222;"><span class="l">2024<i class=d>-</i>06<i class=d>-</i>16 06<i class=c>:</i>04<i class=c>:</i>57</span></div>
<div class="t " style="left:1603px;top:794.5px;font-size:15px;line-height:22px;color:#9c9c9c;">备货来源：</div>
<div class="t " style="left:1685px;top:794.5px;font-size:15px;line-height:22px;color:#222;">系统创建</div>
<div class="r" style="left:2194px;top:749px;width:60px;height:22px;border:1px solid #fcdcae;background:#fff3e2;border-radius:4px"></div>
<div class="t " style="left:2201.5px;top:749.5px;font-size:15px;line-height:22px;color:#f59b25;">待发货</div>
<div class="t " style="left:2264px;top:749.5px;font-size:15px;line-height:22px;color:#3a6cf2;">加入发货台</div>
<svg style="left:2354px;top:755px" width="16" height="6" viewBox="0 0 16 6"><circle cx="2.5" cy="3" r="1.9" fill="#3a6cf2"/><circle cx="7.5" cy="3" r="1.9" fill="#3a6cf2"/><circle cx="12.5" cy="3" r="1.9" fill="#3a6cf2"/></svg>
<div class="r" style="left:2532.5px;top:313px;width:10.5px;height:250px;background:#dcdde2;border-radius:5px"></div>
<div class="r" style="left:701.5px;top:252.5px;width:188px;height:90.5px;background:#fff;border-radius:6px;box-shadow:0 3px 12px rgba(0,0,0,0.12)"></div>
<div class="t " style="left:721px;top:267.0px;font-size:15px;line-height:22px;color:#222;">打印商品条码</div>
<div class="t " style="left:721px;top:307.0px;font-size:15px;line-height:22px;color:#222;">打印拣货单（按模板）</div>
<div class="r" style="left:471px;top:8px;width:112px;height:43px;border:7px solid #fa3333"></div>
<div class="r" style="left:345px;top:49px;width:154px;height:55px;border:7px solid #fa3333"></div>
<div class="r" style="left:692px;top:244px;width:177px;height:59px;border:7px solid #fa3333"></div>
</body></html>
